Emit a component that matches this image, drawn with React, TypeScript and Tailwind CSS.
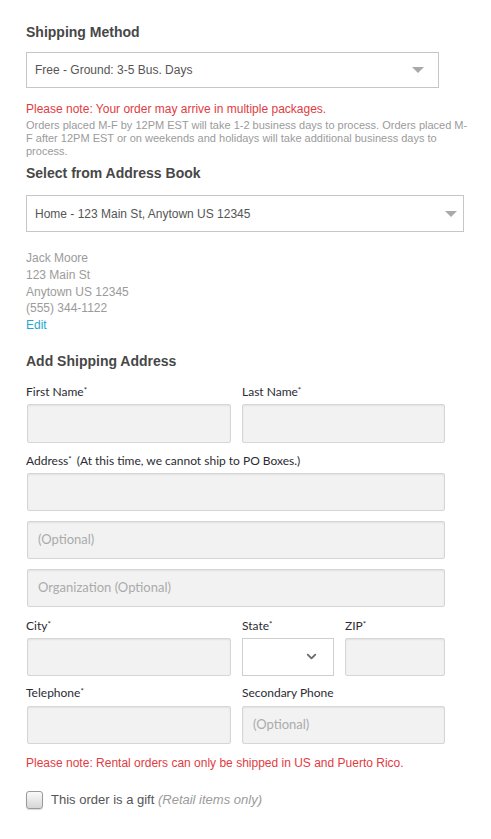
import { ChevronDown } from 'lucide-react'

const sans = { fontFamily: '"Liberation Sans", Arial, sans-serif' }
const label = { fontFamily: 'Lato, "Liberation Sans", sans-serif' }

function Label({ text, note }: { text: string; note?: string }) {
  return (
    <div className="h-[14px] text-[12px] leading-[14px] text-[#2b2b33] whitespace-nowrap" style={label}>
      {text}
      <span className="relative -top-[3px] text-[8px]">*</span>
      {note && <span className="ml-[5px]">{note}</span>}
    </div>
  )
}

function LabelPlain({ text }: { text: string }) {
  return (
    <div className="h-[14px] text-[12px] leading-[14px] text-[#2b2b33] whitespace-nowrap" style={label}>
      {text}
    </div>
  )
}

function Field({ placeholder, short, className = '' }: { placeholder?: string; short?: boolean; className?: string }) {
  return (
    <div
      className={`${short ? 'h-[38px]' : 'h-[39px]'} flex items-center px-[10px] bg-[#f2f2f2] border border-[#d6d6d6] rounded-[2px] shadow-[inset_0_1px_2px_rgba(0,0,0,0.07)] text-[13px] text-[#ababab] ${className}`}
      style={label}
    >
      {placeholder}
    </div>
  )
}

function Triangle() {
  return (
    <svg width="12" height="6" viewBox="0 0 12 6">
      <path d="M0 0 L12 0 L6 6 Z" fill="#a9a9a9" />
    </svg>
  )
}

export default function App() {
  return (
    <div className="w-[491px] min-h-[839px] bg-white pl-[26px] pt-[24px]" style={sans}>
      {/* Shipping method */}
      <h2 className="text-[14px] leading-[16px] font-bold text-[#474747]">Shipping Method</h2>
      <div className="mt-[12px] w-[413px] h-[36px] border border-[#c6c6c6] flex items-center justify-between pl-[8px] pr-[14px]">
        <span className="text-[12px] text-[#555]">Free - Ground: 3-5 Bus. Days</span>
        <Triangle />
      </div>
      <p className="mt-[14px] text-[12px] leading-[15px] text-[#e23b3f]">
        Please note: Your order may arrive in multiple packages.
      </p>
      <p className="mt-[2px] w-[446px] text-[11px] leading-[13px] text-[#9b9b9b]">
        Orders placed M-F by 12PM EST will take 1-2 business days to process. Orders placed M-F after 12PM EST or on
        weekends and holidays will take additional business days to process.
      </p>

      {/* Address book */}
      <h2 className="mt-[7px] text-[14px] leading-[16px] font-bold text-[#474747]">Select from Address Book</h2>
      <div className="mt-[14px] w-[438px] h-[37px] border border-[#c6c6c6] flex items-center justify-between pl-[8px] pr-[6px]">
        <span className="text-[12px] text-[#555]">Home - 123 Main St, Anytown US 12345</span>
        <Triangle />
      </div>
      <div className="mt-[18px] text-[12px] leading-[16.75px] text-[#9b9b9b]">
        <p>Jack Moore</p>
        <p>123 Main St</p>
        <p>Anytown US 12345</p>
        <p>(555) 344-1122</p>
        <p className="text-[#1fa6d4]">Edit</p>
      </div>

      {/* New address */}
      <h2 className="mt-[19px] text-[14px] leading-[16px] font-bold text-[#474747]">Add Shipping Address</h2>
      <div className="mt-[16px] w-[419px]">
        <div className="flex gap-[11px]">
          <div className="w-[205px]">
            <Label text="First Name" />
            <Field className="mt-[5px] ml-px" />
          </div>
          <div className="flex-1">
            <Label text="Last Name" />
            <Field className="mt-[5px]" />
          </div>
        </div>

        <div className="mt-[11px]">
          <Label text="Address" note="(At this time, we cannot ship to PO Boxes.)" />
          <Field short className="mt-[5px] ml-px" />
          <Field short className="mt-[10px] ml-px" placeholder="(Optional)" />
          <Field short className="mt-[10px] ml-px" placeholder="Organization (Optional)" />
        </div>

        <div className="mt-[12px] flex gap-[11px]">
          <div className="w-[205px]">
            <Label text="City" />
            <Field short className="mt-[5px] ml-px" />
          </div>
          <div className="w-[92px]">
            <Label text="State" />
            <div className="mt-[5px] h-[38px] bg-white border border-[#cfcfcf] flex items-center justify-end pr-[14px]">
              <ChevronDown size={15} strokeWidth={3} className="text-[#6b6b6b]" />
            </div>
          </div>
          <div className="flex-1">
            <Label text="ZIP" />
            <Field short className="mt-[5px]" />
          </div>
        </div>

        <div className="mt-[10px] flex gap-[11px]">
          <div className="w-[205px]">
            <Label text="Telephone" />
            <Field short className="mt-[6px] ml-px" />
          </div>
          <div className="flex-1">
            <LabelPlain text="Secondary Phone" />
            <Field short className="mt-[6px]" placeholder="(Optional)" />
          </div>
        </div>
      </div>

      <p className="mt-[12px] text-[12px] leading-[15px] text-[#e23b3f]">
        Please note: Rental orders can only be shipped in US and Puerto Rico.
      </p>

      <label className="mt-[19px] flex items-center gap-[8px] h-[20px]">
        <span className="w-[17px] h-[18px] rounded-[3px] border border-[#9a9a9a] bg-gradient-to-b from-[#fafafa] to-[#d6d6d6] shadow-[0_1px_1px_rgba(0,0,0,0.15)]" />
        <span className="text-[13px] text-[#555]">
          This order is a gift <em className="text-[#9b9b9b]">(Retail items only)</em>
        </span>
      </label>
    </div>
  )
}
